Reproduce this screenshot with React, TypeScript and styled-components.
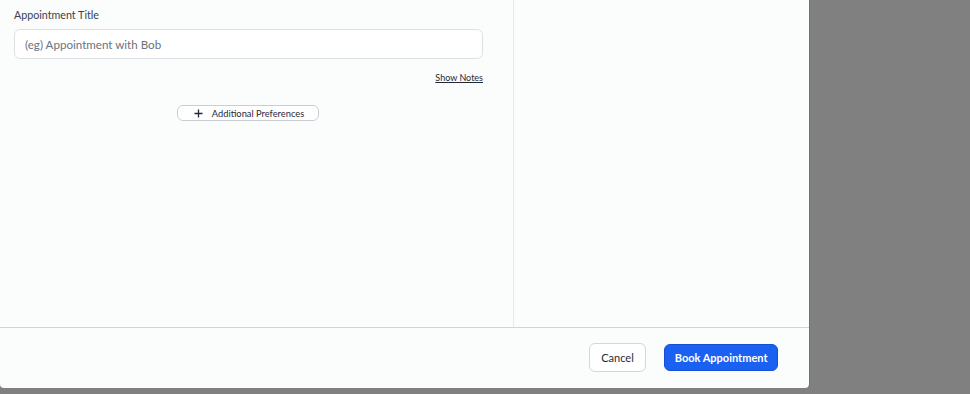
import React, { FC } from "react";
import styled, { createGlobalStyle } from "styled-components";

const GlobalStyle = createGlobalStyle`
  html, body {
    margin: 0;
    padding: 0;
    background: #808080;
    font-family: Lato, "Noto Sans", sans-serif;
  }
`;

const Overlay = styled.div`
  width: 970px;
  height: 394px;
  background: #808080;
  display: flex;
  align-items: flex-start;
  overflow: hidden;
`;

const Modal = styled.div`
  width: 809px;
  height: 388px;
  background: #fbfcfc;
  border-radius: 0 0 4px 4px;
  box-shadow: 1px 0 0 rgba(0, 0, 0, 0.12);
  display: flex;
  flex-direction: column;
`;

const Body = styled.div`
  height: 327px;
  display: grid;
  grid-template-columns: 513px 1px 1fr;
`;

const Divider = styled.div`
  background: #e6e8ec;
`;

const LeftColumn = styled.div`
  padding: 7px 30px 0 14px;
  display: flex;
  flex-direction: column;
`;

const Label = styled.label`
  font-size: 10.7px;
  color: #374151;
  line-height: 16px;
  margin-bottom: 6px;
`;

const Input = styled.input`
  box-sizing: border-box;
  width: 469px;
  height: 30px;
  border: 1px solid #dde1e6;
  border-radius: 6px;
  background: #ffffff;
  padding: 0 10px;
  font-family: inherit;
  font-size: 11.6px;
  color: #1f2937;
  outline: none;

  &::placeholder {
    color: #6b7280;
  }
`;

const NotesRow = styled.div`
  width: 469px;
  display: flex;
  justify-content: flex-end;
  margin-top: 12px;
`;

const TextLink = styled.a`
  font-size: 9px;
  color: #1f2937;
  text-decoration: underline;
  line-height: 14px;
  cursor: pointer;
`;

const PrefRow = styled.div`
  width: 469px;
  display: flex;
  justify-content: center;
  margin-top: 20px;
`;

const PillButton = styled.button`
  box-sizing: border-box;
  width: 142px;
  height: 16px;
  margin-left: -1px;
  border: 1px solid #c9cdd4;
  border-radius: 6px;
  background: #ffffff;
  display: flex;
  align-items: center;
  justify-content: center;
  gap: 9px;
  padding: 0 0 0 2px;
  font-family: inherit;
  font-size: 9.3px;
  color: #1f2937;
  cursor: pointer;
`;

const Footer = styled.div`
  flex: 1;
  border-top: 1px solid #d2d3da;
  display: flex;
  align-items: center;
  justify-content: flex-end;
  gap: 18px;
  padding: 0 31px 1px 0;
`;

const Button = styled.button<{ $primary?: boolean }>`
  box-sizing: border-box;
  height: ${p => (p.$primary ? "27px" : "29px")};
  padding: 0 ${p => (p.$primary ? "9.5px" : "11.5px")};
  border-radius: 6px;
  border: 1px solid ${p => (p.$primary ? "#1450d6" : "#d3d6dc")};
  background: ${p => (p.$primary ? "#1a60f1" : "#ffffff")};
  color: ${p => (p.$primary ? "#ffffff" : "#1f2937")};
  font-family: inherit;
  font-size: 11px;
  font-weight: ${p => (p.$primary ? 700 : 400)};
  cursor: pointer;
`;

const PlusIcon = () => (
  <svg width="9" height="9" viewBox="0 0 9 9">
    <path d="M4.5 0.5v8M0.5 4.5h8" stroke="#1f2937" strokeWidth="1.3" />
  </svg>
);

const App: FC = () => {
  return (
    <>
      <GlobalStyle />
      <Overlay>
        <Modal>
          <Body>
            <LeftColumn>
              <Label>Appointment Title</Label>
              <Input placeholder="(eg) Appointment with Bob" />
              <NotesRow>
                <TextLink>Show Notes</TextLink>
              </NotesRow>
              <PrefRow>
                <PillButton>
                  <PlusIcon />
                  Additional Preferences
                </PillButton>
              </PrefRow>
            </LeftColumn>
            <Divider />
            <div />
          </Body>
          <Footer>
            <Button>Cancel</Button>
            <Button $primary>Book Appointment</Button>
          </Footer>
        </Modal>
      </Overlay>
    </>
  );
};

export default App;
